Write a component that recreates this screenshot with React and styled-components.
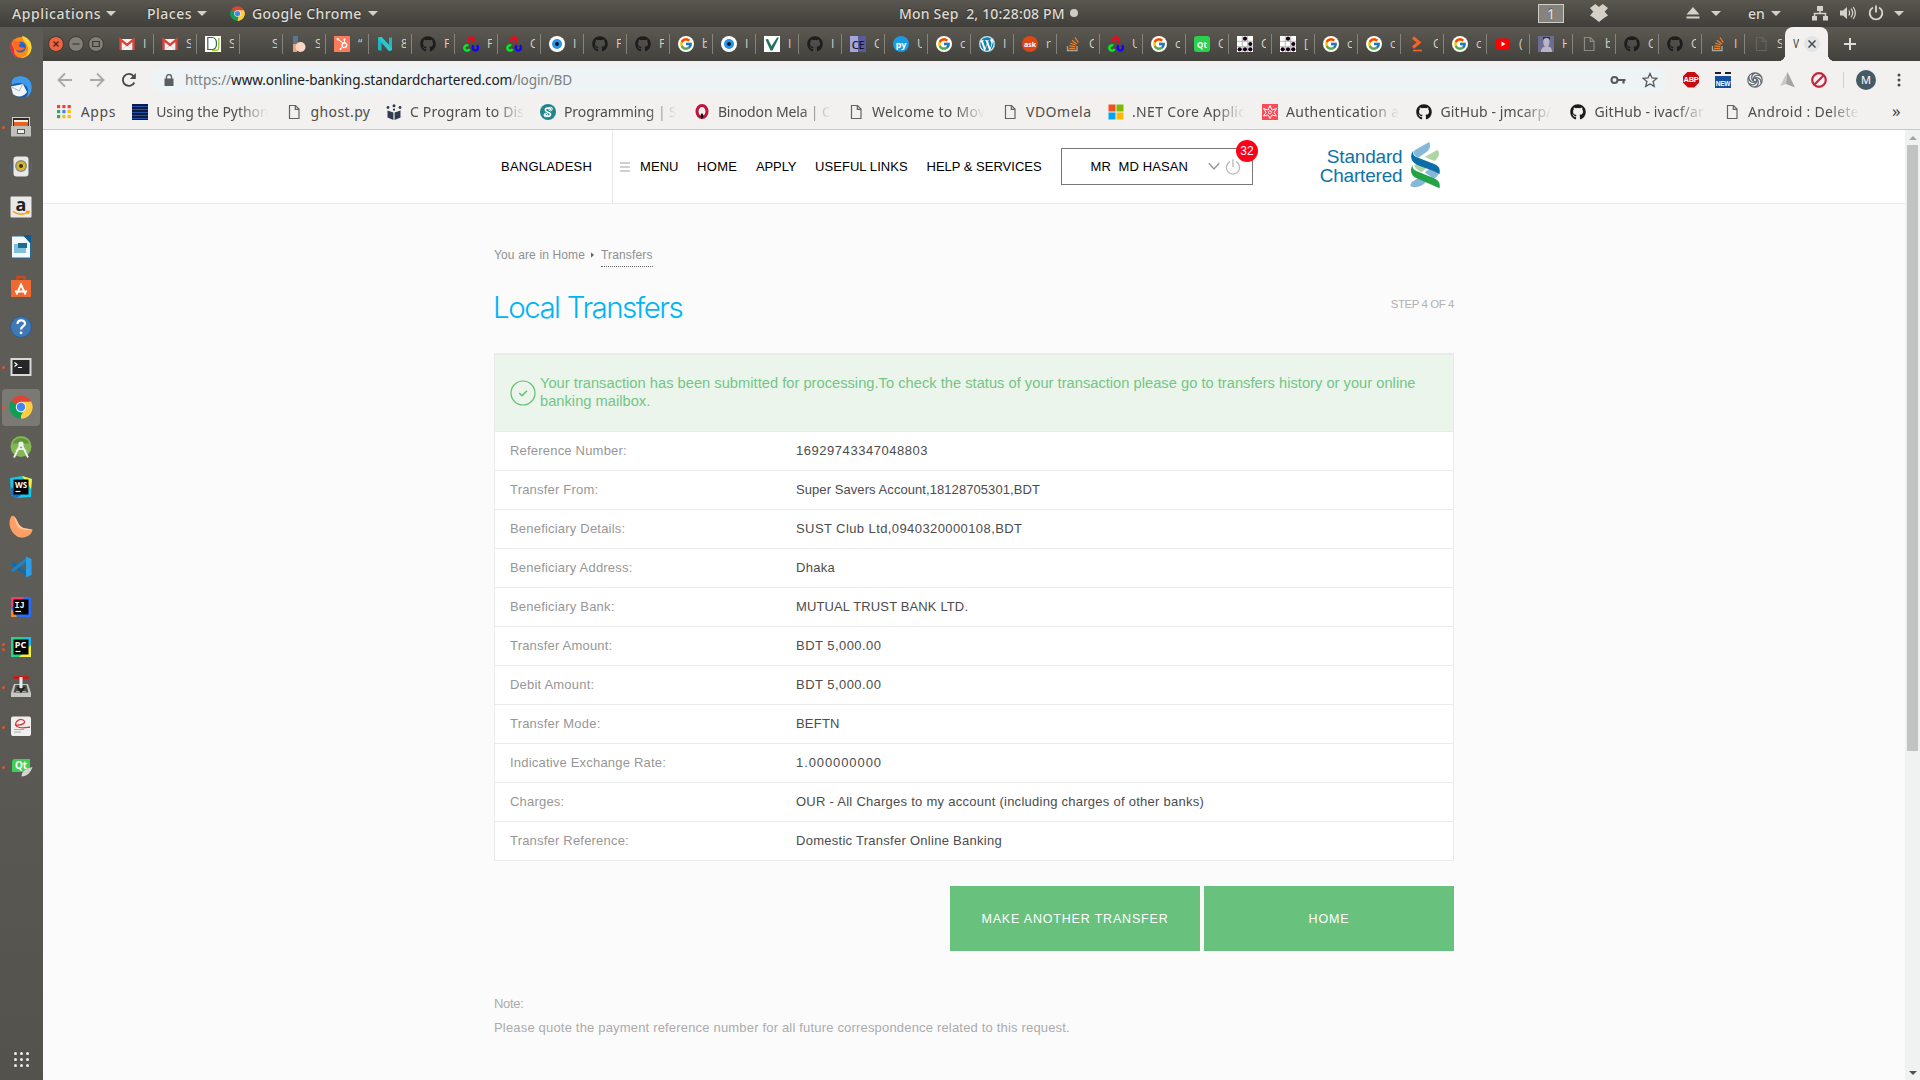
import React from "react";
import styled, { createGlobalStyle, css } from "styled-components";
import { FaGithub, FaWordpress, FaHubspot } from "react-icons/fa";
import { FcGoogle } from "react-icons/fc";

const ui = `"Noto Sans", "Open Sans", sans-serif`;
const web = `"Liberation Sans", Arial, sans-serif`;

const GlobalStyle = createGlobalStyle`
  * { box-sizing: border-box; }
  body { margin: 0; overflow: hidden; background: #fbfbfb; }
  svg { display: block; flex: none; }
`;

/* ---------- desktop shell ---------- */

const Desktop = styled.div`
  width: 1920px;
  height: 1080px;
  display: grid;
  grid-template: 27px 1053px / 43px 1877px;
  font-family: ${ui};
  overflow: hidden;
`;

const TopBar = styled.header`
  grid-column: 1 / 3;
  display: grid;
  grid-template-columns: 899px 639px 382px;
  background: linear-gradient(#59574f, #403e3a);
  color: #dfdbd2;
  font-size: 14px;
  font-weight: 500;
  line-height: 25px;
  white-space: pre;
  text-shadow: 0 -1px 1px rgba(0, 0, 0, 0.4);
`;

const BarGroup = styled.div`
  display: flex;
  align-items: center;
  height: 26px;
`;

const BarText = styled.span`
  width: ${(p) => p.$w}px;
  margin-left: ${(p) => p.$ml || 0}px;
  letter-spacing: ${(p) => p.$ls || 0}px;
`;

const Caret = styled.i`
  margin-left: ${(p) => p.$ml}px;
  border: 5px solid transparent;
  border-top: 5px solid #d5d1c9;
  border-bottom: 0;
`;

const BarIcon = styled.span`
  margin-left: ${(p) => p.$ml || 0}px;
  color: #d5d1c9;
`;

const Workspace = styled.span`
  width: 26px;
  height: 19px;
  border: 1px solid #cfccc6;
  background: #85837e;
  text-align: center;
  line-height: 17px;
  font-size: 14px;
`;

const Dot = styled.i`
  width: 8px;
  height: 8px;
  margin-left: 4px;
  border-radius: 50%;
  background: #cfccc6;
`;

const Dock = styled.aside`
  display: flex;
  flex-direction: column;
  background: linear-gradient(#5b5a54, #5f5d58 50%, #54524d);
`;

const DockItem = styled.div`
  height: 40px;
  display: flex;
  align-items: center;
  padding-left: 2px;
`;

const DockTile = styled.div`
  width: 38px;
  height: 37px;
  border-radius: 4px;
  display: grid;
  grid-template-columns: 4px 1fr;
  align-items: center;
  background: ${(p) => (p.$active ? "#7b7974" : "transparent")};
`;

const Pips = styled.div`
  display: grid;
  gap: 2px;
  i {
    width: 3px;
    height: 3px;
    border-radius: 50%;
    background: #e95420;
  }
`;

const DockIcon = styled.div`
  padding-left: 3px;
`;

const AppsButton = styled.div`
  margin-top: auto;
  height: 41px;
  display: grid;
  grid-template-columns: repeat(3, 3px);
  gap: 3px;
  justify-content: center;
  align-content: center;
  i {
    width: 3px;
    height: 3px;
    border-radius: 50%;
    background: #eeeeec;
  }
`;

/* ---------- browser ---------- */

const Browser = styled.main`
  display: grid;
  grid-template-rows: 34px 37px 32px 950px;
  min-width: 0;
`;

const TabStrip = styled.div`
  display: flex;
  background: linear-gradient(#5b5951, #43413d);
`;

const WindowButtons = styled.div`
  width: 68px;
  display: flex;
  gap: 4px;
  padding-left: 5px;
  align-items: center;
`;

const WindowButton = styled.span`
  width: 16px;
  height: 16px;
  border-radius: 50%;
  background: ${(p) => p.$c};
  border: 1px solid #3a3935;
  display: grid;
  place-items: center;
`;

const Tab = styled.div`
  width: ${(p) => p.$w || 43}px;
  height: 34px;
  display: flex;
  align-items: center;
  padding-left: 8px;
  gap: 8px;
  background: linear-gradient(#85837c, #85837c) right center / 1px ${(p) => (p.$last ? 0 : 20)}px no-repeat;
`;

const TabIcon = styled.span`
  width: 16px;
  height: 16px;
  flex: none;
`;

const TabText = styled.span`
  width: 5px;
  overflow: hidden;
  color: #d3d0c9;
  font-family: "Open Sans", ${ui};
  font-size: 12px;
  line-height: 18px;
  white-space: nowrap;
`;

const ActiveTab = styled.div`
  position: relative;
  width: 43px;
  height: 34px;
  border-radius: 8px 8px 0 0;
  background: #f2f1ef;
  display: flex;
  align-items: center;
  padding-left: 8px;
  gap: 5px;
  ${TabText} {
    color: #4a4a4a;
    width: 6px;
  }
  &::before,
  &::after {
    content: "";
    position: absolute;
    bottom: 0;
    width: 7px;
    height: 7px;
  }
  &::before {
    left: -7px;
    background: radial-gradient(circle at 0 0, transparent 7px, #f2f1ef 7.5px);
  }
  &::after {
    right: -7px;
    background: radial-gradient(circle at 100% 0, transparent 7px, #f2f1ef 7.5px);
  }
`;

const CloseTab = styled.span`
  width: 16px;
  height: 16px;
  border-radius: 50%;
  background: #e3e4e6;
  display: grid;
  place-items: center;
`;

const NewTab = styled.span`
  align-self: center;
  margin-left: 15px;
`;

const Toolbar = styled.div`
  background: #f2f1ef;
  display: flex;
  align-items: center;
`;

const NavIcons = styled.div`
  width: 108px;
  display: flex;
  align-items: center;
  gap: 16px;
  padding-left: 14px;
`;

const Omnibox = styled.div`
  width: 1516px;
  height: 28px;
  border-radius: 14px;
  background: #eef3f5;
  display: flex;
  align-items: center;
  padding: 0 9px 0 13px;
  color: #7b7f83;
  font-size: 13.6px;
`;

const Url = styled.span`
  margin-left: 11px;
  flex: 1;
  letter-spacing: -0.1px;
  b {
    font-weight: 400;
    color: #202124;
  }
`;

const OmniIcons = styled.div`
  display: flex;
  gap: 16px;
  align-items: center;
`;

const Extensions = styled.div`
  display: flex;
  align-items: center;
  gap: 16px;
  margin-left: 16px;
`;

const Abp = styled.span`
  width: 16px;
  height: 16px;
  background: #c70d12;
  color: #fff;
  font: 700 7.5px/16px ${web};
  letter-spacing: -0.3px;
  text-align: center;
  clip-path: polygon(30% 0, 70% 0, 100% 30%, 100% 70%, 70% 100%, 30% 100%, 0 70%, 0 30%);
`;

const NewBadge = styled.span`
  width: 16px;
  height: 16px;
  background: linear-gradient(#14509c, #14509c) 0 100% / 16px 12px no-repeat;
  border-top: 2px dashed #222;
  color: #fff;
  font: 700 6.5px/19px ${web};
  letter-spacing: -0.2px;
  text-align: center;
`;

const Divider = styled.i`
  width: 1px;
  height: 16px;
  background: #cfcfcd;
`;

const Avatar = styled.span`
  width: 20px;
  height: 20px;
  margin-left: -4px;
  border-radius: 50%;
  background: #455a64;
  color: #fff;
  font-size: 11px;
  line-height: 20px;
  text-align: center;
`;

const Bookmarks = styled.div`
  background: #f2f1ef;
  border-bottom: 1px solid #cbcac8;
  display: flex;
  align-items: center;
  padding: 0 0 4px 13px;
`;

const Bookmark = styled.div`
  flex: none;
  width: ${(p) => p.$w}px;
  display: grid;
  grid-template-columns: ${(p) => p.$icon}px 1fr;
  align-items: center;
`;

const BookmarkText = styled.span`
  width: ${(p) => p.$tw}px;
  overflow: hidden;
  white-space: pre;
  font-size: 14px;
  line-height: 20px;
  color: #4d4d4d;
  letter-spacing: ${(p) => p.$ls}px;
  ${(p) =>
    p.$fade &&
    css`
      mask-image: linear-gradient(to right, #000 calc(100% - 30px), transparent);
    `}
`;

const More = styled.span`
  margin-left: 1px;
  color: #444;
  font-size: 17px;
  line-height: 18px;
  padding-bottom: 2px;
`;

const Viewport = styled.div`
  display: grid;
  grid-template-columns: 1862px 15px;
  font-family: ${web};
`;

const Page = styled.div`
  background: #fbfbfb;
  overflow: hidden;
`;

const Scrollbar = styled.div`
  background: #f0f2f1;
  display: flex;
  flex-direction: column;
  align-items: center;
  padding: 6px 0 5px;
`;

const Thumb = styled.div`
  width: 11px;
  height: 606px;
  margin: 5px 0 auto;
  background: #c1c3c2;
`;

const Arrow = styled.i`
  border: 4px solid transparent;
  ${(p) => (p.$up ? "border-top: 0; border-bottom: 4px solid #a3a3a3;" : "border-bottom: 0; border-top: 4px solid #505050;")}
`;

/* ---------- bank page ---------- */

const SiteHeader = styled.div`
  height: 74px;
  background: #fff;
  border-bottom: 1px solid #ebebeb;
  display: flex;
  justify-content: center;
`;

const HeaderInner = styled.div`
  width: 960px;
  display: flex;
  align-items: center;
  font-size: 13px;
  color: #000;
  white-space: pre;
`;

const Country = styled.div`
  width: 119px;
  height: 73px;
  padding-left: 7px;
  line-height: 73px;
  letter-spacing: 0.22px;
  border-right: 1px solid #e8e8e8;
`;

const Burger = styled.span`
  width: 10px;
  margin: 0 0 0 7px;
  display: grid;
  gap: 2px;
  i {
    height: 2px;
    background: #d0d0d0;
  }
`;

const NavLink = styled.span`
  width: ${(p) => p.$w}px;
  letter-spacing: ${(p) => p.$ls}px;
`;

const Nav = styled.nav`
  display: flex;
  margin-left: 10px;
`;

const UserBox = styled.div`
  position: relative;
  width: 192px;
  height: 37px;
  margin-left: 0.5px;
  border: 1px solid #777;
  display: flex;
  align-items: center;
  padding-left: 28.5px;
  letter-spacing: 0.13px;
`;

const UserName = styled.span`
  width: 117.5px;
`;

const PowerIcon = styled.span`
  margin-left: 5px;
`;

const Badge = styled.span`
  position: absolute;
  top: -9px;
  right: -6px;
  width: 22px;
  height: 22px;
  border-radius: 50%;
  background: #ff0019;
  color: #fff;
  font-size: 12px;
  line-height: 22px;
  text-align: center;
`;

const Logo = styled.div`
  margin-left: 66.5px;
  padding-bottom: 3px;
  display: flex;
  align-items: center;
  gap: 7px;
`;

const LogoText = styled.div`
  width: 83px;
  padding-top: 2px;
  font-size: 19px;
  line-height: 19.5px;
  letter-spacing: -0.18px;
  text-align: right;
  color: #0e73a8;
`;

const Content = styled.section`
  width: 960px;
  margin: 0 auto;
  padding-top: 40px;
`;

const Crumbs = styled.div`
  display: flex;
  height: 23px;
  font-size: 12px;
  line-height: 22px;
  letter-spacing: 0.14px;
  color: #8f8f8f;
`;

const CrumbArrow = styled.i`
  margin: 8px 7px 0 5.5px;
  width: 3.5px;
  height: 6px;
  background: #666;
  clip-path: polygon(0 0, 100% 50%, 0 100%);
`;

const CrumbLink = styled.span`
  border-bottom: 1px dotted #666;
`;

const TitleRow = styled.div`
  display: flex;
  justify-content: space-between;
  margin-top: 20px;
  height: 40px;
`;

const Title = styled.h1`
  margin: 0 0 0 -1px;
  font: 300 29.5px/40px Inter, sans-serif;
  letter-spacing: -1.5px;
  word-spacing: 0.5px;
  color: #00b5f5;
`;

const Step = styled.span`
  font-size: 11.5px;
  line-height: 34px;
  letter-spacing: -0.45px;
  color: #b2b2b2;
`;

const Alert = styled.div`
  margin-top: 26px;
  height: 78px;
  border: 1px solid #e8ebe8;
  border-top: 2px solid #e8ebe8;
  border-bottom: 0;
  background: #ebf5ec;
  display: flex;
  padding: 19px 0 0 14.5px;
`;

const AlertIcon = styled.span`
  margin: 6px 4.5px 0 0;
`;

const AlertText = styled.p`
  margin: 0;
  width: 890px;
  font-size: 14.67px;
  line-height: 18px;
  letter-spacing: 0.02px;
  color: #74c586;
`;

const Table = styled.div`
  border: 1px solid #ebebeb;
  border-top: 0;
  background: #fff;
`;

const Row = styled.div`
  height: 39px;
  border-top: 1px solid #ebebeb;
  padding-left: 15px;
  display: grid;
  grid-template-columns: 286px 1fr;
  line-height: 38px;
  font-size: 13px;
`;

const Label = styled.span`
  color: #979797;
  letter-spacing: 0.2px;
`;

const Value = styled.span`
  color: #4c4c4c;
  letter-spacing: ${(p) => p.$ls}px;
`;

const Actions = styled.div`
  margin-top: 25px;
  display: flex;
  justify-content: flex-end;
  gap: 4px;
`;

const Button = styled.button`
  width: 250px;
  height: 65px;
  border: 0;
  padding: 0;
  background: #68c17c;
  color: #fff;
  font: 12.5px ${web};
  letter-spacing: 0.82px;
`;

const Note = styled.p`
  margin: 41px 0 0;
  font-size: 13px;
  line-height: 24px;
  letter-spacing: 0.18px;
  color: #ababab;
`;

const NoteTitle = styled.span`
  letter-spacing: -0.3px;
`;

/* ---------- icons ---------- */

const Svg = ({ s = 16, box = 16, children, ...rest }) => (
  <svg width={s} height={s} viewBox={`0 0 ${box} ${box}`} fill="none" {...rest}>
    {children}
  </svg>
);

const ChromeLogo = ({ s = 16 }) => (
  <Svg s={s} box={48}>
    <path d="M24 24 L4.1 12.5 A23 23 0 0 1 43.9 12.5 Z" fill="#db4437" />
    <path d="M24 24 L43.9 12.5 A23 23 0 0 1 24 47 Z" fill="#ffcd40" />
    <path d="M24 24 L24 47 A23 23 0 0 1 4.1 12.5 Z" fill="#0f9d58" />
    <path d="M24 13.5H43.4A22 22 0 0 1 24 47L33 29Z" fill="#ffcd40" />
    <path d="M4.1 12.5 15 29.5A10.5 10.5 0 0 0 28 34L21 46.8A23 23 0 0 1 4.1 12.5Z" fill="#0f9d58" />
    <circle cx="24" cy="24" r="10.5" fill="#f1f1f1" />
    <circle cx="24" cy="24" r="8.4" fill="#4285f4" />
  </Svg>
);

const Doc = ({ c = "#5f6368" }) => (
  <Svg>
    <path d="M3.5 1.5h6l3.5 3.5v9.500H3.500zM9.300 1.500V5.300H13" stroke={c} strokeWidth="1.2" />
  </Svg>
);

const Gmail = () => (
  <Svg>
    <path d="M1 3h14v11H1z" fill="#f3f3f3" />
    <path d="M3 13.500 8 9l5 4.500" stroke="#d5d5d5" />
    <path d="M1.500 14V3.500L8 9l6.500-5.500V14" stroke="#d9453a" strokeWidth="2.400" />
  </Svg>
);

const OpenCv = () => (
  <Svg>
    <g strokeWidth="2.400">
      <path d="M6.500 6.300A2.700 2.700 0 1 1 9.500 6.300" stroke="#ff0018" />
      <path d="M5.300 9.500A2.700 2.700 0 1 0 6.500 13" stroke="#00f020" />
      <path d="M10.800 9.500A2.700 2.700 0 1 0 13.800 9.500" stroke="#1500ff" />
    </g>
  </Svg>
);

const Glider = () => (
  <Svg>
    <path d="M0 0h16v16H0z" fill="#fff" />
    <path d="M5.300 0v16M10.700 0v16M0 5.300h16M0 10.700h16" stroke="#b5b5b5" />
    <g fill="#180018">
      <circle cx="8" cy="2.700" r="2.100" />
      <circle cx="13.300" cy="8" r="2.100" />
      <circle cx="2.700" cy="13.300" r="2.100" />
      <circle cx="8" cy="13.300" r="2.100" />
      <circle cx="13.300" cy="13.300" r="2.100" />
    </g>
  </Svg>
);

const Eye = () => (
  <Svg>
    <circle cx="8" cy="8" r="8" fill="#fff" />
    <circle cx="8" cy="8" r="5" fill="#2694e8" />
    <circle cx="8" cy="8" r="2" fill="#06172c" />
  </Svg>
);

const Letters = styled.span`
  display: grid;
  place-items: center;
  width: 16px;
  height: 16px;
  line-height: 15px;
  font-size: ${(p) => p.$s || 8}px;
  font-weight: ${(p) => p.$fw || 700};
  letter-spacing: ${(p) => p.$ls || 0}px;
  color: ${(p) => p.$c || "#fff"};
  background: ${(p) => p.$bg};
  border-radius: ${(p) => p.$r || 0};
`;

const WhiteDisc = styled.span`
  width: 16px;
  height: 16px;
  border-radius: 50%;
  background: #fff;
  display: grid;
  place-items: center;
`;

const Google = () => (
  <WhiteDisc>
    <FcGoogle size={14} />
  </WhiteDisc>
);
const Github = () => <FaGithub size={16} color="#1d1d1d" />;
const WordPress = () => (
  <WhiteDisc>
    <FaWordpress size={16} color="#1380b0" />
  </WhiteDisc>
);
const Overflow = () => (
  <Svg>
    <path d="M2.500 10v4.500h9.500V10" stroke="#a9a9a4" strokeWidth="1.300" />
    <path d="M4.300 12.300h6M4.400 9.800l5.900.8M5.200 7l5.500 2M7 4.200l4.700 3.700M10 1.500l3.300 5" stroke="#f48024" strokeWidth="1.300" />
  </Svg>
);
const HubSpot = () => (
  <Letters $bg="#ff7a59">
    <FaHubspot size={12} />
  </Letters>
);

const icons = {
  gmail: <Gmail />,
  cv: <OpenCv />,
  eye: <Eye />,
  gh: <Github />,
  g: <Google />,
  so: <Overflow />,
  wp: <WordPress />,
  life: <Glider />,
  hub: <HubSpot />,
  none: null,
  doc: <Doc c="#8b8984" />,
  docDim: <Doc c="#65635e" />,
  d: (
    <Svg>
      <path d="M0 0h16v16H0z" fill="#fff" />
      <path d="M2.800 1.500h4c3.200 0 4.700 2 4.700 6s-1.500 6-4 6H2.800z" stroke="#2d6a60" strokeWidth="1.200" />
      <path d="M13.800 2v9.500c0 2-1 3-3.500 3H7" stroke="#a9c833" strokeWidth="1.500" />
    </Svg>
  ),
  b: (
    <Svg>
      <path d="M2 0h5v9H2z" fill="#5a7590" />
      <path d="M2 8h4v8H2z" fill="#eea36a" />
      <circle cx="9.500" cy="11" r="5" fill="#fbd6c4" />
    </Svg>
  ),
  n: (
    <Svg>
      <path d="M1 1.500 4.500 1 12 9V1.500h3V14l-3 1L4.500 7v8L1 14z" fill="#20b5c4" />
      <path d="M1 1.500 4.500 1 15 12v2l-3 1z" fill="#2fc6c9" />
    </Svg>
  ),
  v: (
    <Svg>
      <path d="M0 0h16v16H0z" fill="#fff" />
      <path d="M1.500 3.500 4 3l3.500 7L13 1.500h2L8.500 14.500H6.500z" fill="#23725c" />
    </Svg>
  ),
  ce: <Letters $bg="linear-gradient(90deg,#a5a5dc 50%,#5a5a9c 50%)" $c="#15152a" $s={11} $fw={500} $ls={-0.3}>CE</Letters>,
  py: <Letters $bg="#1b9be0" $r="50%" $s={9}>py</Letters>,
  ask: <Letters $bg="#dd4814" $r="50%" $s={7}>ask</Letters>,
  qt: <Letters $bg="#2bd04d" $r="3px">Qt</Letters>,
  arrow: (
    <Svg>
      <path d="M4 1.500 10 6.500 4 11.500" stroke="#f2652a" strokeWidth="3" />
      <path d="M4 14.500h9" stroke="#f2652a" strokeWidth="1.600" />
    </Svg>
  ),
  yt: (
    <Svg>
      <rect x="1" y="2.500" width="14" height="11" rx="2.500" fill="#f00" />
      <path d="M6.500 5.500v5L10.500 8z" fill="#fff" />
    </Svg>
  ),
  photo: (
    <Svg>
      <path d="M0 0h16v16H0z" fill="#6d6d94" />
      <path d="M3 16c0-4 2-5 4-5.500C4 7 5 2 8.500 2s4 5 1.500 8.500c3 .5 4 2 4 5.500z" fill="#b9b4c8" />
      <path d="M5 4c1-3 6-3 7 0v-3H5z" fill="#302c45" />
    </Svg>
  ),
};

const tabs = [
  ["gmail", "I"], ["gmail", "S"], ["d", "S"], ["none", "S"], ["b", "S"], ["hub", "“"], ["n", "8"],
  ["gh", "F"], ["cv", "F"], ["cv", "C"], ["eye", "I"], ["gh", "F"], ["gh", "F"], ["g", "b"],
  ["eye", "I"], ["v", "I"], ["gh", "I"], ["ce", "C"], ["py", "U"], ["g", "c"], ["wp", "I"],
  ["ask", "r"], ["so", "C"], ["cv", "U"], ["g", "c"], ["qt", "C"], ["life", "C"], ["life", "["],
  ["g", "c"], ["g", "c"], ["arrow", "C"], ["g", "c"], ["yt", "("], ["photo", "H"], ["doc", "b"],
  ["gh", "C"], ["gh", "C"], ["so", "I"], ["docDim", "S"],
];

const bmIcons = {
  apps: (
    <Svg>
      {["#e8453c", "#e8453c", "#e8453c", "#34a853", "#4285f4", "#fbbc05", "#34a853", "#fbbc05", "#fbbc05"].map((c, i) => (
        <rect key={i} x={1 + (i % 3) * 5.3} y={1 + Math.floor(i / 3) * 5} width="3.200" height="3.200" fill={c} />
      ))}
    </Svg>
  ),
  stripes: (
    <Svg>
      <path d="M0 0h16v16H0z" fill="#0d1c42" />
      <path d="M0 2.500h16M0 5.500h16M0 8.500h16M0 11.500h16M0 14.500h16" stroke="#2450b0" />
    </Svg>
  ),
  doc: <Doc />,
  book: (
    <Svg>
      <path d="M1.500 6.500 7.400 8.500V16L1.500 13.500zM14.500 6.500 8.600 8.500V16l5.900-2.500z" fill="#2f3b50" />
      <circle cx="8" cy="1.700" r="1.500" fill="#2f3b50" />
      <circle cx="2" cy="3.500" r="1.400" fill="#2f3b50" />
      <circle cx="14" cy="3.500" r="1.400" fill="#2f3b50" />
      <circle cx="8" cy="5.700" r="1.100" fill="#2f3b50" />
    </Svg>
  ),
  prog: (
    <Svg>
      <circle cx="8" cy="8" r="8" fill="#20868c" />
      <path d="M11 5.500C9 3 4.500 4 5.500 6.500S11 8 10.500 10.500 6 13 4.500 10.500" stroke="#fff" strokeWidth="1.600" />
      <circle cx="10.500" cy="5" r="1.800" stroke="#fff" />
      <circle cx="5.800" cy="11" r="1.800" stroke="#fff" />
    </Svg>
  ),
  o: (
    <Svg>
      <ellipse cx="8" cy="7.500" rx="5" ry="6" stroke="#c4123c" strokeWidth="3" />
      <path d="M8 9c2 2 2 4 0 6-2-2-2-4 0-6z" fill="#111" />
    </Svg>
  ),
  ms: (
    <Svg>
      <path d="M.5.500h7v7h-7z" fill="#f25022" />
      <path d="M8.500.500h7v7h-7z" fill="#7fba00" />
      <path d="M.5 8.500h7v7h-7z" fill="#00a4ef" />
      <path d="M8.500 8.500h7v7h-7z" fill="#ffb900" />
    </Svg>
  ),
  red: (
    <Svg>
      <path d="M0 0h16v16H0z" fill="#f94c58" />
      <path d="M8 1.500 10 6l4.500-1.500L12 8.500l2.500 3.500-4.500-1L8 14.500l-2-3.500-4.500 1L4 8.500 1.500 4.500 6 6z" stroke="#fff" strokeWidth="1" />
      <circle cx="8" cy="8.300" r="1.500" stroke="#fff" />
    </Svg>
  ),
  gh: <FaGithub size={16} color="#1b1b1b" />,
};

const bookmarks = [
  ["apps", "Apps", 75.5, 24.8, 40, 0.6],
  ["stripes", "Using the Python", 154, 24.7, 112, -0.05, true],
  ["doc", "ghost.py", 100.500, 25, 62, 0.4],
  ["book", "C Program to Dis", 154, 24, 115, 0.18, true],
  ["prog", "Programming | S", 153.500, 24, 113, -0.1, true],
  ["o", "Binodon Mela | C", 154.500, 24.4, 113, -0.15, true],
  ["doc", "Welcome to Mov", 154, 24, 113, 0.29, true],
  ["doc", "VDOmela", 105.500, 24, 67, 0.5],
  ["ms", ".NET Core Applic", 154.500, 24.5, 113, 0.33, true],
  ["red", "Authentication a", 154, 24, 113, 0.31, true],
  ["gh", "GitHub - jmcarp/", 154, 24.500, 111, 0.12, true],
  ["gh", "GitHub - ivacf/ar", 154, 24.500, 111, 0.12, true],
  ["doc", "Android : Delete", 167, 24, 111, 0.31, true],
];

const Jet = ({ text, a, b, c }) => (
  <Svg s={24} box={24}>
    <path d="M1 3 13 1 23 4 22 22 8 23 2 20z" fill={a} />
    <path d="M13 1 23 4 22 14z" fill={b} />
    <path d="M2 20 8 23 12 20 2 12z" fill={c} />
    <rect x="4.500" y="4.500" width="15" height="15" fill="#000" />
    <text x="12" y="12.500" textAnchor="middle" fontSize="8" fontWeight="700" fill="#fff" fontFamily="Noto Sans">{text}</text>
    <path d="M6.500 16.500h5" stroke="#fff" strokeWidth="1.200" />
  </Svg>
);

const dock = [
  [0, (
    <Svg s={24} box={24}>
      <circle cx="12" cy="12.500" r="10.500" fill="#ff8a16" />
      <path d="M13 1c6 1 10 6 9.500 12S17 23.500 11 23c6-1 9-5 8-10s-5-6-6-12z" fill="#ffd43a" />
      <path d="M2 8C0 16 4 22 11 23c-4-1-7-5-6-9z" fill="#e8264f" />
      <circle cx="11.500" cy="12" r="5.500" fill="#2a62c9" />
      <path d="M4 4c2 2 4 2 6 3l2 2c-2 0-3 2-1 3 2 1 3 0 5 1-2 3-7 4-10 1S3 8 4 4z" fill="#ff6a22" />
    </Svg>
  )],
  [0, (
    <Svg s={24} box={24}>
      <circle cx="12.500" cy="12" r="10.500" fill="#1c5ca8" />
      <path d="M5 3c6-4 15-1 17 5s0 12-5 15c3-5 3-10-1-13S6 8 3 10c-1-3 0-5 2-7z" fill="#3f9bea" />
      <path d="M2 11.500 14 9l4 8c-3 5-10 6-14 2z" fill="#f2f5fa" />
      <path d="m2 11.500 8 4.500 4-7" stroke="#a9b6c8" />
    </Svg>
  )],
  [1, (
    <Svg s={24} box={24}>
      <path d="M3 2h18v19H3z" fill="#cfcfcb" />
      <path d="M4 3h16v9H4z" fill="#302a26" />
      <path d="M5 5h14v2H5z" fill="#f5f0e5" />
      <path d="M5 7h14v4H5z" fill="#e8641c" />
      <path d="M2 11h20v10.500H2z" fill="#bfbfbb" />
      <rect x="8.500" y="14.500" width="7" height="4" fill="#eee" stroke="#555" />
    </Svg>
  )],
  [0, (
    <Svg s={24} box={24}>
      <path d="M2 8c-1 3-1 6 1 9M22 8c1 3 1 6-1 9" stroke="#4a6f9c" />
      <rect x="4.500" y="1.500" width="15" height="20" rx="3" fill="#e9e9e7" />
      <circle cx="12" cy="11" r="6" fill="#8b8b87" />
      <circle cx="12" cy="11" r="4.500" fill="#dcb61e" />
      <circle cx="12" cy="11" r="2" fill="#333" />
    </Svg>
  )],
  [0, (
    <Svg s={24} box={24}>
      <rect x="1.500" y="1.500" width="21" height="21" rx="1" fill="#e9e9e9" />
      <text x="12" y="15.500" textAnchor="middle" fontSize="18" fontWeight="700" fill="#222" fontFamily="Noto Sans">a</text>
      <path d="M4 16.500c5 3.500 11 3.500 15 .5M17 16.500h3l-.8 2.500" stroke="#ff9900" strokeWidth="1.500" />
    </Svg>
  )],
  [0, (
    <Svg s={24} box={24}>
      <path d="M2.500 1H15l6.500 7v15h-19z" fill="#f5f8fa" stroke="#1e6f9c" />
      <path d="M14 0h8v8.500z" fill="#0b5c92" />
      <path d="M5 9h12v9H5z" fill="#7fc0df" />
      <path d="M9 8h9v5H9z" fill="#1c6c95" />
    </Svg>
  )],
  [0, (
    <Svg s={24} box={24}>
      <path d="M8.500 5V2h7v3" stroke="#c84a20" strokeWidth="2.500" />
      <path d="M2 5h20v17H2z" fill="#ee6a32" />
      <path d="m7.500 19.500 4.500-10 4.500 10M6 16.500h12" stroke="#fff" strokeWidth="1.900" />
    </Svg>
  )],
  [0, (
    <Svg s={24} box={24}>
      <circle cx="12" cy="12" r="10.500" fill="#3f79b5" stroke="#2c5c92" />
      <path d="M8.500 9c0-5 7.500-4.500 7.500-.5 0 3-4 2.500-4 6" stroke="#fff" strokeWidth="2.200" />
      <circle cx="12" cy="17.800" r="1.400" fill="#fff" />
    </Svg>
  )],
  [1, (
    <Svg s={24} box={24}>
      <rect x="1.500" y="3" width="21" height="18" fill="#d9d9d6" />
      <rect x="3.500" y="5" width="17" height="14" fill="#272727" />
      <path d="m5.500 7.500 2.500 2-2.500 2M9 12.500h4" stroke="#fff" strokeWidth="1.200" />
    </Svg>
  )],
  [1, <ChromeLogo s={24} />],
  [0, (
    <Svg s={24} box={24}>
      <circle cx="12" cy="11.500" r="10.500" fill="#83b755" />
      <path d="M4 8.500c1-7 15-7 16 0z" fill="#5f9638" />
      <circle cx="12" cy="9" r="2.600" fill="#f2f2f2" />
      <path d="m11 10-6 12.500M13 10l6 12.500M7 16c3-2.500 7-2.500 10 0" stroke="#f2f2f2" strokeWidth="1.800" />
    </Svg>
  )],
  [0, <Jet text="WS" a="#16c7e8" b="#f4ee43" c="#1173d6" />],
  [0, (
    <Svg s={24} box={24}>
      <path d="M4.500 1C8 3 8 8 12 11.500c3 2.500 7 2 11.500 3C23 20 17 23 11.500 22.500 4 21.500-2 11 1.500 3 2 1.500 3 .5 4.500 1z" fill="#fda068" />
      <path d="M4.500 1C8 3 8 8 12 11.500c3 2.500 7 2 11.500 3-7 1-12 1-15-3C6.500 8.500 6 4 4.500 1z" fill="#ffc196" />
    </Svg>
  )],
  [0, (
    <Svg s={24} box={24}>
      <path d="M3 8 18.500 20" stroke="#0a6cb5" strokeWidth="3" />
      <path d="M3 16 18.500 4" stroke="#1387d0" strokeWidth="3" />
      <path d="m17 1.500 5.500 2.500v16L17 22.500z" fill="#2a9fe8" />
    </Svg>
  )],
  [0, (
    <Svg s={24} box={24}>
      <path d="M2 2h20v20H2z" fill="#2a6df0" />
      <path d="M2 2h14L2 13z" fill="#fb3a68" />
      <path d="M2 13 8 22H2z" fill="#f7892c" />
      <rect x="4.500" y="4.500" width="15" height="15" fill="#000" />
      <text x="10.500" y="12.500" textAnchor="middle" fontSize="8.500" fontWeight="700" fill="#fff" fontFamily="Liberation Mono">IJ</text>
      <path d="M6.500 16.500h5.500" stroke="#fff" strokeWidth="1.200" />
    </Svg>
  )],
  [2, (
    <Svg s={24} box={24}>
      <path d="M2 2h20v20H2z" fill="#22d683" />
      <path d="M22 2v12L13 2z" fill="#21b9ea" />
      <path d="M22 10v12H10z" fill="#f3ef3e" />
      <rect x="4.500" y="4.500" width="15" height="15" fill="#000" />
      <text x="11.500" y="12.500" textAnchor="middle" fontSize="9" fontWeight="700" fill="#fff" fontFamily="Noto Sans">PC</text>
      <path d="M6.500 16.500h5" stroke="#fff" strokeWidth="1.200" />
    </Svg>
  )],
  [1, (
    <Svg s={24} box={24}>
      <path d="M5 9h14l3 9v4H2v-4z" fill="#c5c5c2" />
      <path d="M6.500 10h11l2 7.500h-15z" fill="#4b4b49" />
      <path d="M7 16.500h10" stroke="#a5a5a2" strokeWidth="1" />
      <path d="M5.500 2.700h13" stroke="#c31c1c" strokeWidth="3.200" strokeLinecap="round" />
      <path d="M12 2v11" stroke="#ececea" strokeWidth="3" />
      <path d="m8.500 12 3.500 4.500 3.500-4.500" stroke="#222" strokeWidth="2" />
    </Svg>
  )],
  [1, (
    <Svg s={24} box={24}>
      <rect x="2" y="1.500" width="20" height="19.500" rx="2" fill="#efefed" />
      <path d="M6 10c8 1 12-3 8-5S4 8 8 11.500c4 2.500 9 1 13 .5" stroke="#d5383c" strokeWidth="1.300" />
      <path d="M5 14.500h10M5 17h7" stroke="#aaa" />
    </Svg>
  )],
  [1, (
    <Svg s={24} box={24}>
      <path d="M5 4h16v13H3V6z" fill="#41cd52" />
      <text x="12" y="14" textAnchor="middle" fontSize="10" fontWeight="700" fill="#fff" fontFamily="Noto Sans">Qt</text>
      <path d="M12.500 21.500c0-5 4-8 11-9.500-2 5-4 9-11 9.500z" fill="#d5d5d2" />
    </Svg>
  )],
];

const BankSymbol = () => (
  <svg width="31" height="48" viewBox="330 26 92 144">
    <path d="M387 29C393 42 388 52 378 60L354 76C340 68 336 60 346 52Z" fill="#86b8da" />
    <path d="M412 52C421 64 415 77 402 86L374 74Z" fill="#aed5a2" />
    <path d="M342 98 352 94 380 106 364 120C350 112 344 106 342 98Z" fill="#aed5a2" />
    <path d="M374 120 392 106 416 122C413 131 409 135 400 139Z" fill="#86b8da" />
    <path d="M330 160 335 149 354 137 378 149C362 163 346 170 330 160Z" fill="#86b8da" />
    <path d="M340 55C336 65 341 71 350 75L404 96C416 101 421 109 418 125 396 113 372 106 350 97 331 89 328 68 340 55Z" fill="#0a6fa9" />
    <path d="M338 97C335 107 341 113 350 117L400 137C416 144 421 152 418 168L350 138C331 130 328 112 338 97Z" fill="#21a346" />
  </svg>
);

const rows = [
  ["Reference Number:", "16929743347048803", 0.54],
  ["Transfer From:", "Super Savers Account,18128705301,BDT", 0.07],
  ["Beneficiary Details:", "SUST Club Ltd,0940320000108,BDT", 0.41],
  ["Beneficiary Address:", "Dhaka", 0.3],
  ["Beneficiary Bank:", "MUTUAL TRUST BANK LTD.", 0.13],
  ["Transfer Amount:", "BDT 5,000.00", 0.46],
  ["Debit Amount:", "BDT 5,000.00", 0.46],
  ["Transfer Mode:", "BEFTN", 0.2],
  ["Indicative Exchange Rate:", "1.000000000", 0.91],
  ["Charges:", "OUR - All Charges to my account (including charges of other banks)", 0.26],
  ["Transfer Reference:", "Domestic Transfer Online Banking", 0.27],
];

function SystemBar() {
  return (
    <TopBar>
      <BarGroup>
        <BarText $ml={12} $w={89} $ls={0.58}>Applications</BarText>
        <Caret $ml={5} />
        <BarText $ml={31} $w={44.5} $ls={0.49}>Places</BarText>
        <Caret $ml={5} />
        <BarIcon $ml={23.5}><ChromeLogo s={15} /></BarIcon>
        <BarText $ml={7} $w={110} $ls={0.4}>Google Chrome</BarText>
        <Caret $ml={5.500} />
      </BarGroup>
      <BarGroup>
        <BarText $w={167} $ls={0.18}>{"Mon Sep  2, 10:28:08 PM"}</BarText>
        <Dot />
      </BarGroup>
      <BarGroup>
        <Workspace>1</Workspace>
        <BarIcon $ml={26}>
          <Svg s={18} box={18}>
            <path d="M5.300 0 9 3l3.700-3L18 4l-3.300 3.700L18 11.500l-3.700 2.300L9 18l-5.300-4.200L0 11.500l3.300-3.800L0 4z" fill="currentColor" />
          </Svg>
        </BarIcon>
        <BarIcon $ml={78}>
          <Svg s={14} box={14}>
            <path d="M7 1 13.500 8.500H.5zM.5 10.500h13v2H.5z" fill="currentColor" />
          </Svg>
        </BarIcon>
        <Caret $ml={11} />
        <BarText $ml={27} $w={17}>en</BarText>
        <Caret $ml={6} />
        <BarIcon $ml={31}>
          <Svg>
            <path d="M5 1h6v5H5zM0 11h5v4.500H0zM11 11h5v4.500h-5z" fill="currentColor" />
            <path d="M8 5v3.500M2.500 11V8.500h11V11" stroke="currentColor" strokeWidth="1.500" />
          </Svg>
        </BarIcon>
        <BarIcon $ml={11.500}>
          <Svg>
            <path d="M0 5.500h3L7 2v12l-4-3.500H0z" fill="currentColor" />
            <path d="M8.800 5.500c1 1.500 1 3.500 0 5M11 3.700c2 2.600 2 6 0 8.600M13.200 2c2.600 3.700 2.600 8.300 0 12" stroke="currentColor" strokeWidth="1.300" />
          </Svg>
        </BarIcon>
        <BarIcon $ml={12.500}>
          <Svg>
            <path d="M5 2.500a6.300 6.300 0 1 0 6 0M8 .5v7" stroke="currentColor" strokeWidth="1.900" />
          </Svg>
        </BarIcon>
        <Caret $ml={10} />
      </BarGroup>
    </TopBar>
  );
}

function AppDock() {
  return (
    <Dock>
      {dock.map(([pips, icon], i) => (
        <DockItem key={i}>
          <DockTile $active={i === 9}>
            <Pips>{Array.from({ length: pips }, (_, k) => <i key={k} />)}</Pips>
            <DockIcon>{icon}</DockIcon>
          </DockTile>
        </DockItem>
      ))}
      <AppsButton>{Array.from({ length: 9 }, (_, k) => <i key={k} />)}</AppsButton>
    </Dock>
  );
}

function Tabs() {
  return (
    <TabStrip>
      <WindowButtons>
        <WindowButton $c="#ee6440">
          <Svg s={8} box={8}><path d="m1.500 1.500 5 5m0-5-5 5" stroke="#4b2015" strokeWidth="1.200" /></Svg>
        </WindowButton>
        <WindowButton $c="#807e77">
          <Svg s={8} box={8}><path d="M.5 4h7" stroke="#3a3935" strokeWidth="1.200" /></Svg>
        </WindowButton>
        <WindowButton $c="#807e77">
          <Svg s={8} box={8}><path d="M.7 1.500h6.600v5H.7z" stroke="#3a3935" strokeWidth="1.200" /></Svg>
        </WindowButton>
      </WindowButtons>
      {tabs.map(([icon, text], i) => (
        <Tab key={i} $w={i === 38 ? 40 : 43} $last={i === 38}>
          <TabIcon>{icons[icon]}</TabIcon>
          <TabText>{text}</TabText>
        </Tab>
      ))}
      <ActiveTab>
        <TabText>W</TabText>
        <CloseTab>
          <Svg s={8} box={8}><path d="m.5.5 7 7m0-7-7 7" stroke="#4a4a4a" strokeWidth="1.500" /></Svg>
        </CloseTab>
      </ActiveTab>
      <NewTab>
        <Svg s={14} box={14}><path d="M7 1v12M1 7h12" stroke="#dedcd6" strokeWidth="2" /></Svg>
      </NewTab>
    </TabStrip>
  );
}

function AddressBar() {
  return (
    <Toolbar>
      <NavIcons>
        <Svg><path d="M15 8H2M8 1.500 1.500 8 8 14.500" stroke="#a8a8a6" strokeWidth="1.800" /></Svg>
        <Svg><path d="M1 8h13M8 1.500 14.500 8 8 14.500" stroke="#a8a8a6" strokeWidth="1.800" /></Svg>
        <Svg>
          <path d="M13.300 10.500A6 6 0 1 1 12.300 3.800L14 5.500" stroke="#4a4a4a" strokeWidth="1.900" />
          <path d="M14.800 1v6h-6z" fill="#4a4a4a" />
        </Svg>
      </NavIcons>
      <Omnibox>
        <Svg s={10} box={10} height={12} viewBox="0 0 10 12">
          <path d="M.5 4.500h9V12h-9z" fill="#5a5e63" />
          <path d="M2.500 5V3a2.500 2.500 0 0 1 5 0v2" stroke="#5a5e63" strokeWidth="1.300" />
        </Svg>
        <Url>https://<b>www.online-banking.standardchartered.com</b>/login/BD</Url>
        <OmniIcons>
          <Svg>
            <circle cx="4.500" cy="8" r="3" stroke="#55585c" strokeWidth="2" />
            <path d="M7.500 8H15.500M13.500 8v3.500" stroke="#55585c" strokeWidth="2.200" />
          </Svg>
          <Svg>
            <path d="m8 1.500 2 4.500 4.800.4-3.700 3.200 1.200 4.800L8 11.900l-4.300 2.500 1.200-4.800L1.200 6.400 6 6z" stroke="#55585c" strokeWidth="1.300" />
          </Svg>
        </OmniIcons>
      </Omnibox>
      <Extensions>
        <Abp>ABP</Abp>
        <NewBadge>NEW</NewBadge>
        <Svg>
          <circle cx="8" cy="8" r="7.200" stroke="#5b6670" strokeWidth="1.200" />
          <g stroke="#5b6670" strokeWidth="1.200">
            <path id="swirl" d="M8 1C3.500 3 3.500 8 8 10" />
            <path d="M8 1C3.500 3 3.500 8 8 10" transform="rotate(60 8 8)" />
            <path d="M8 1C3.500 3 3.500 8 8 10" transform="rotate(120 8 8)" />
            <path d="M8 1C3.500 3 3.500 8 8 10" transform="rotate(180 8 8)" />
            <path d="M8 1C3.500 3 3.500 8 8 10" transform="rotate(240 8 8)" />
            <path d="M8 1C3.500 3 3.500 8 8 10" transform="rotate(300 8 8)" />
          </g>
        </Svg>
        <Svg>
          <path d="M8.500 0 1 14l6-2z" fill="#c8c8c7" />
          <path d="M8.500 0 16 15.500 7 12z" fill="#a4a4a3" />
        </Svg>
        <Svg>
          <circle cx="8" cy="8" r="6.800" stroke="#c5253c" strokeWidth="2.200" />
          <path d="m12.500 3.500-9 9" stroke="#c5253c" strokeWidth="2.200" />
        </Svg>
        <Divider />
        <Avatar>M</Avatar>
        <Svg s={16}>
          <g fill="#4a4a4a">
            <circle cx="7" cy="3" r="1.500" />
            <circle cx="7" cy="8" r="1.500" />
            <circle cx="7" cy="13" r="1.500" />
          </g>
        </Svg>
      </Extensions>
    </Toolbar>
  );
}

function BankPage() {
  return (
    <Page>
      <SiteHeader>
        <HeaderInner>
          <Country>BANGLADESH</Country>
          <Burger><i /><i /><i /></Burger>
          <Nav>
            <NavLink $w={57} $ls={0.07}>MENU</NavLink>
            <NavLink $w={59} $ls={0.33}>HOME</NavLink>
            <NavLink $w={59} $ls={-0.11}>APPLY</NavLink>
            <NavLink $w={111.500} $ls={0.06}>USEFUL LINKS</NavLink>
            <NavLink $w={134} $ls={0}>HELP &amp; SERVICES</NavLink>
          </Nav>
          <UserBox>
            <UserName>{"MR  MD HASAN"}</UserName>
            <Svg s={12} box={12}><path d="m.8 2.300 5.200 5.700 5.200-5.700" stroke="#999" strokeWidth="1.500" /></Svg>
            <PowerIcon>
              <Svg s={16}><path d="M5 2.600a6.600 6.600 0 1 0 6 0M8 .3v7.700" stroke="#b9b9b9" strokeWidth="1.300" /></Svg>
            </PowerIcon>
            <Badge>32</Badge>
          </UserBox>
          <Logo>
            <LogoText>Standard<br />Chartered</LogoText>
            <BankSymbol />
          </Logo>
        </HeaderInner>
      </SiteHeader>
      <Content>
        <Crumbs>
          You are in Home
          <CrumbArrow />
          <CrumbLink>Transfers</CrumbLink>
        </Crumbs>
        <TitleRow>
          <Title>Local Transfers</Title>
          <Step>STEP 4 OF 4</Step>
        </TitleRow>
        <Alert>
          <AlertIcon>
            <Svg s={26} box={26}>
              <circle cx="13" cy="13" r="12" stroke="#5fbf75" strokeWidth="1.200" />
              <path d="m9.300 13 2.700 2.700 5-5" stroke="#5fbf75" strokeWidth="1.500" />
            </Svg>
          </AlertIcon>
          <AlertText>
            Your transaction has been submitted for processing.To check the status of your transaction please go to
            transfers history or your online banking mailbox.
          </AlertText>
        </Alert>
        <Table>
          {rows.map(([label, value, ls]) => (
            <Row key={label}>
              <Label>{label}</Label>
              <Value $ls={ls}>{value}</Value>
            </Row>
          ))}
        </Table>
        <Actions>
          <Button>MAKE ANOTHER TRANSFER</Button>
          <Button>HOME</Button>
        </Actions>
        <Note>
          <NoteTitle>Note:</NoteTitle>
          <br />
          Please quote the payment reference number for all future correspondence related to this request.
        </Note>
      </Content>
    </Page>
  );
}

export default function App() {
  return (
    <Desktop>
      <GlobalStyle />
      <SystemBar />
      <AppDock />
      <Browser>
        <Tabs />
        <AddressBar />
        <Bookmarks>
          {bookmarks.map(([icon, text, w, iconW, tw, ls, fade]) => (
            <Bookmark key={text} $w={w} $icon={iconW}>
              {bmIcons[icon]}
              <BookmarkText $tw={tw} $ls={ls} $fade={fade}>{text}</BookmarkText>
            </Bookmark>
          ))}
          <More>»</More>
        </Bookmarks>
        <Viewport>
          <BankPage />
          <Scrollbar>
            <Arrow $up />
            <Thumb />
            <Arrow />
          </Scrollbar>
        </Viewport>
      </Browser>
    </Desktop>
  );
}
